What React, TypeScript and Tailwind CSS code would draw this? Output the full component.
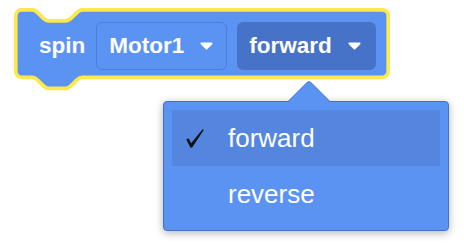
import React from "react";

const BLOCK_PATH = (() => {
  const a = 1.75;
  const r = 6;
  const W = 376;
  const B = 69.25;
  const nx = 18;
  const notch =
    "c 2.8,0 4.2,1.4 5.6,2.8 l 5.6,5.6 c 1.4,1.4 2.8,2.8 5.6,2.8 h 16.8 c 2.8,0 4.2,-1.4 5.6,-2.8 l 5.6,-5.6 c 1.4,-1.4 2.8,-2.8 5.6,-2.8";
  const tab =
    "c -2.8,0 -4.2,1.4 -5.6,2.8 l -5.6,5.6 c -1.4,1.4 -2.8,2.8 -5.6,2.8 h -16.8 c -2.8,0 -4.2,-1.4 -5.6,-2.8 l -5.6,-5.6 c -1.4,-1.4 -2.8,-2.8 -5.6,-2.8";
  return [
    `M ${a} ${a + r}`,
    `A ${r} ${r} 0 0 1 ${a + r} ${a}`,
    `H ${nx}`,
    notch,
    `H ${W - a - r}`,
    `A ${r} ${r} 0 0 1 ${W - a} ${a + r}`,
    `V ${B - r}`,
    `A ${r} ${r} 0 0 1 ${W - a - r} ${B}`,
    `H ${nx + 50.4}`,
    tab,
    `H ${a + r}`,
    `A ${r} ${r} 0 0 1 ${a} ${B - r}`,
    "Z",
  ].join(" ");
})();

function Caret() {
  return (
    <svg width="13" height="8" viewBox="0 0 13 8" className="shrink-0">
      <path
        d="M1.5 1.5 H11.5 L6.5 6.5 Z"
        fill="#ffffff"
        stroke="#ffffff"
        strokeWidth="2"
        strokeLinejoin="round"
      />
    </svg>
  );
}

function Check() {
  return (
    <svg width="18" height="19" viewBox="0 0 18 19" className="shrink-0">
      <path
        d="M0.3 10.4 Q1.6 9.2 2.9 9.8 L5.1 14.3 L16.4 0.4 Q17.4 -0.1 17.8 0.9 L6.3 18.2 Q5.1 19.1 4.1 18.1 Z"
        fill="#111111"
      />
    </svg>
  );
}

export default function App() {
  return (
    <div
      className="relative w-[464px] h-[246px] bg-white overflow-hidden"
      style={{ fontFamily: '"Liberation Sans", Arial, Helvetica, sans-serif' }}
    >
      {/* Block */}
      <div className="relative ml-[14px] mt-[8px] w-[376px] h-[86px]">
        <svg
          className="absolute inset-0"
          width="376"
          height="86"
          viewBox="0 0 376 86"
        >
          <path
            d={BLOCK_PATH}
            fill="#5b93f3"
            stroke="#fde94a"
            strokeWidth="3.75"
            strokeLinejoin="round"
          />
        </svg>
        <div className="relative flex items-center pt-[14px] pl-[25px]">
          <span className="text-[22.5px] font-bold text-white leading-none mr-[11px]">
            spin
          </span>
          <div className="flex items-center justify-between w-[131px] h-[48px] border border-[#4a7edb] rounded-[6px] bg-[#5b93f3] pl-[12px] pr-[13px]">
            <span className="text-[22.5px] font-bold text-white leading-none">
              Motor1
            </span>
            <Caret />
          </div>
          <div className="ml-[10px] flex items-center justify-between w-[139px] h-[48px] rounded-[6px] bg-[#4673c8] pl-[12px] pr-[15px]">
            <span className="text-[22.5px] font-bold text-white leading-none">
              forward
            </span>
            <Caret />
          </div>
        </div>
      </div>

      {/* Dropdown menu */}
      <div className="absolute left-[163px] top-[101px] w-[286px] h-[130px] rounded-[4px] border border-[#4471c6] bg-[#5b93f3] p-[8px] shadow-[0_2px_9px_rgba(0,0,0,0.3)]">
        <div className="absolute left-[130px] top-[-16px] w-[30px] h-[30px] rotate-45 rounded-tl-[4px] border-t border-l border-[#4471c6] bg-[#5b93f3]" />
        <div className="relative flex flex-col">
          <div className="flex items-center h-[56px] bg-[#5586df]">
            <div className="w-[56px] flex items-center pl-[14px]">
              <Check />
            </div>
            <span className="text-[26px] text-white">forward</span>
          </div>
          <div className="flex items-center h-[56px]">
            <div className="w-[56px]" />
            <span className="text-[26px] text-white">reverse</span>
          </div>
        </div>
      </div>
    </div>
  );
}
